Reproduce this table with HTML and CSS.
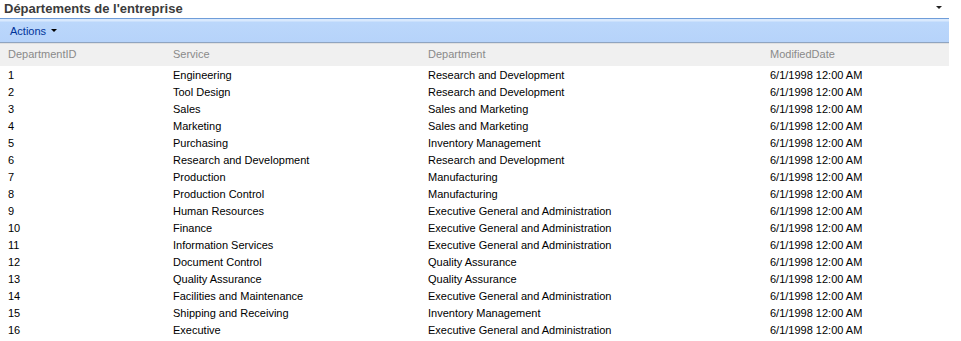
FILE: index.html
```html
<!DOCTYPE html>
<html>
<head>
<meta charset="utf-8">
<link rel="stylesheet" href="styles.css">
</head>
<body>
<div class="part">
  <div class="title-bar">
    <span class="title">Départements de l'entreprise</span>
    <span class="menu-arrow"></span>
  </div>
  <div class="toolbar">
    <span class="actions">Actions</span><span class="arrow"></span>
  </div>
  <table class="grid">
    <thead>
      <tr><th class="c1">DepartmentID</th><th class="c2">Service</th><th class="c3">Department</th><th class="c4">ModifiedDate</th></tr>
    </thead>
    <tbody>
      <tr><td>1</td><td>Engineering</td><td>Research and Development</td><td>6/1/1998 12:00 AM</td></tr>
      <tr><td>2</td><td>Tool Design</td><td>Research and Development</td><td>6/1/1998 12:00 AM</td></tr>
      <tr><td>3</td><td>Sales</td><td>Sales and Marketing</td><td>6/1/1998 12:00 AM</td></tr>
      <tr><td>4</td><td>Marketing</td><td>Sales and Marketing</td><td>6/1/1998 12:00 AM</td></tr>
      <tr><td>5</td><td>Purchasing</td><td>Inventory Management</td><td>6/1/1998 12:00 AM</td></tr>
      <tr><td>6</td><td>Research and Development</td><td>Research and Development</td><td>6/1/1998 12:00 AM</td></tr>
      <tr><td>7</td><td>Production</td><td>Manufacturing</td><td>6/1/1998 12:00 AM</td></tr>
      <tr><td>8</td><td>Production Control</td><td>Manufacturing</td><td>6/1/1998 12:00 AM</td></tr>
      <tr><td>9</td><td>Human Resources</td><td>Executive General and Administration</td><td>6/1/1998 12:00 AM</td></tr>
      <tr><td>10</td><td>Finance</td><td>Executive General and Administration</td><td>6/1/1998 12:00 AM</td></tr>
      <tr><td>11</td><td>Information Services</td><td>Executive General and Administration</td><td>6/1/1998 12:00 AM</td></tr>
      <tr><td>12</td><td>Document Control</td><td>Quality Assurance</td><td>6/1/1998 12:00 AM</td></tr>
      <tr><td>13</td><td>Quality Assurance</td><td>Quality Assurance</td><td>6/1/1998 12:00 AM</td></tr>
      <tr><td>14</td><td>Facilities and Maintenance</td><td>Executive General and Administration</td><td>6/1/1998 12:00 AM</td></tr>
      <tr><td>15</td><td>Shipping and Receiving</td><td>Inventory Management</td><td>6/1/1998 12:00 AM</td></tr>
      <tr><td>16</td><td>Executive</td><td>Executive General and Administration</td><td>6/1/1998 12:00 AM</td></tr>
    </tbody>
  </table>
</div>
</body>
</html>
```
FILE: styles.css
```css
html, body {
  margin: 0;
  padding: 0;
  background: #ffffff;
}
body {
  font-family: "Liberation Sans", Arial, sans-serif;
  font-size: 11px;
  color: #000000;
}
.part {
  width: 949px;
}
.title-bar {
  height: 18px;
  display: flex;
  align-items: center;
  justify-content: space-between;
  padding-left: 4px;
  box-sizing: border-box;
}
.title {
  font-weight: bold;
  font-size: 13px;
  color: #3b3b3b;
  position: relative;
  top: -1px;
}
.menu-arrow {
  width: 0;
  height: 0;
  border-left: 3px solid transparent;
  border-right: 3px solid transparent;
  border-top: 3px solid #222;
  margin-right: 7px;
  position: relative;
  top: -2px;
}
.toolbar {
  height: 25px;
  box-sizing: border-box;
  border-top: 1px solid #6f9dd9;
  border-bottom: 1px solid #8fa4c0;
  background: linear-gradient(to bottom, #d9e9fd 0px, #d9e9fd 2px, #bbd7fb 3px, #b6d3fa 100%);
  display: flex;
  align-items: center;
  padding-left: 10px;
}
.actions {
  color: #003399;
  font-size: 11px;
}
.arrow {
  width: 0;
  height: 0;
  border-left: 3px solid transparent;
  border-right: 3px solid transparent;
  border-top: 3px solid #000;
  margin-left: 5px;
  margin-top: -1px;
}
.grid {
  border-collapse: collapse;
  width: 949px;
  table-layout: fixed;
}
.grid th {
  background: #f0f0f0;
  color: #8a8a8a;
  font-weight: normal;
  text-align: left;
  height: 19px;
  padding: 0 0 3px 0;
  border-top: 1px solid #e0e0e0;
}
.grid td {
  height: 17px;
  padding: 0;
  white-space: nowrap;
}
.grid th.c1 { width: 165px; padding-left: 8px; }
.grid th.c2 { width: 255px; }
.grid th.c3 { width: 342px; }
.grid td:first-child { padding-left: 8px; }
```
